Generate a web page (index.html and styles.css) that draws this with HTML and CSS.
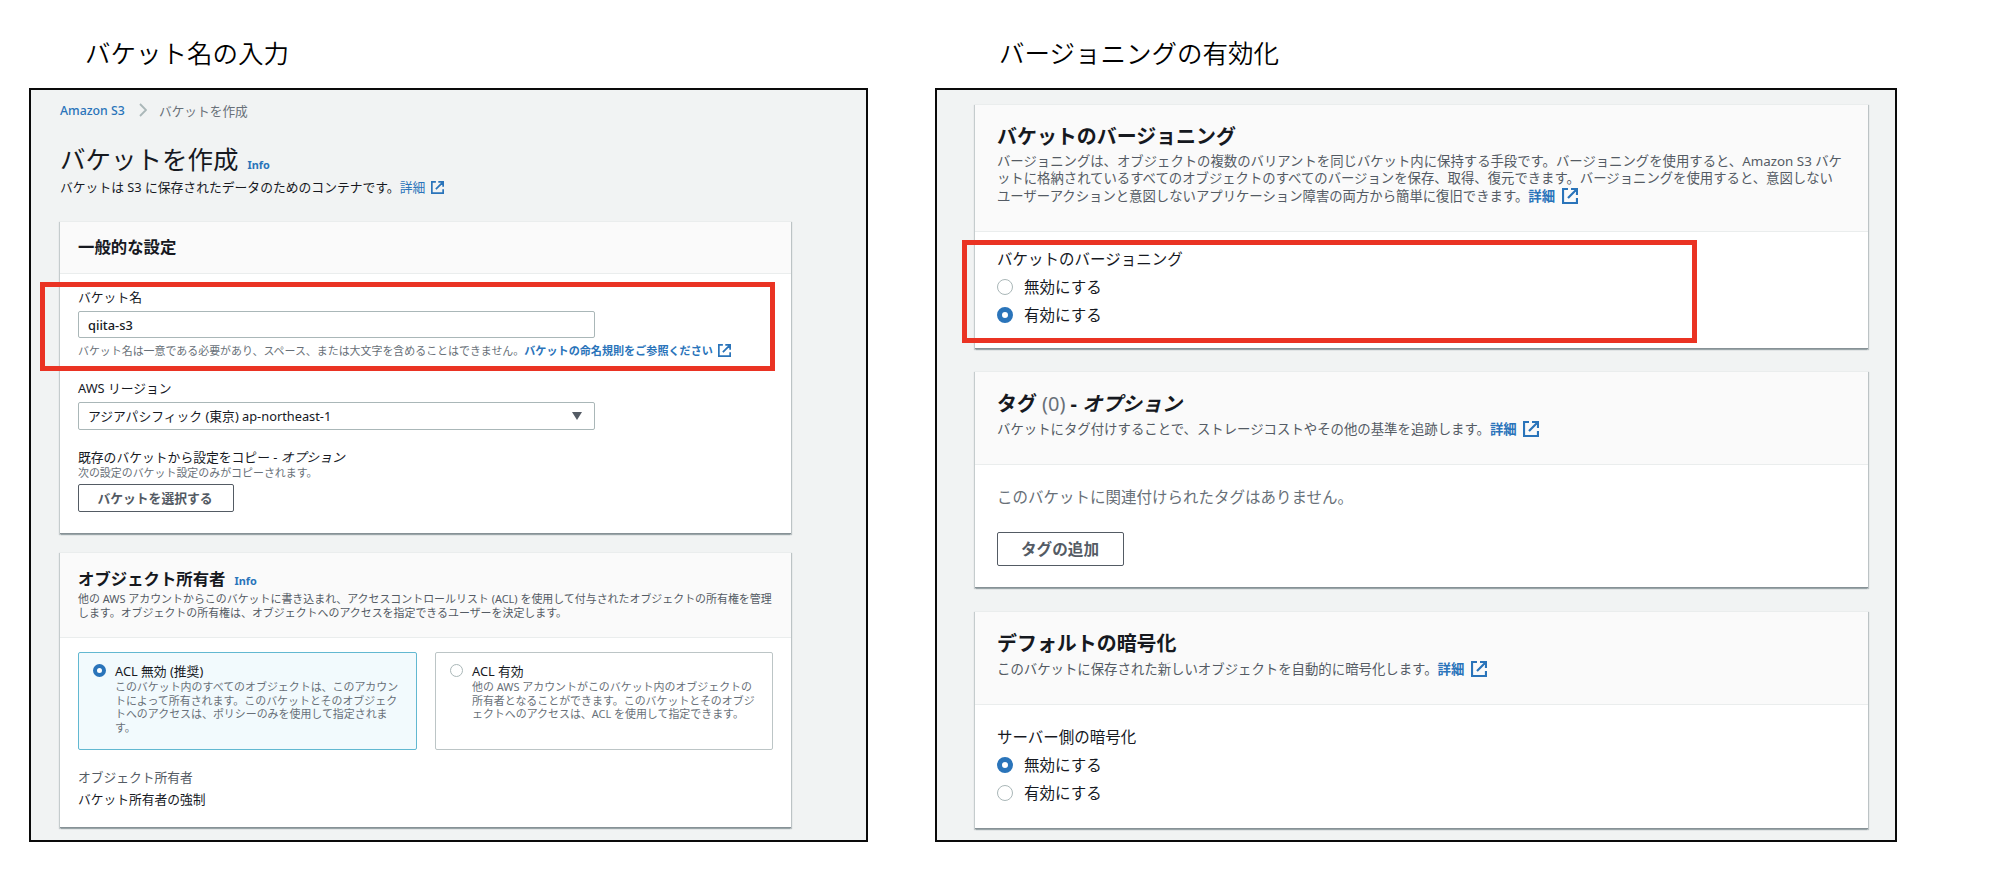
FILE: index.html
```html
<!DOCTYPE html>
<html lang="ja">

<head>
    <meta charset="UTF-8">
    <meta name="viewport" content="width=device-width, initial-scale=1.0">
    <title>バケットを作成</title>
    <link rel="stylesheet" href="styles.css">
</head>

<body>
    <!-- external link icon, used after every link -->
    <svg class="defs" width="0" height="0">
        <symbol id="external" viewBox="0 0 16 16">
            <path d="M6 1H1v14h14v-5M9 1h6v6M15 1L6 10" fill="none" stroke="currentColor" stroke-width="2.2" />
        </symbol>
    </svg>

    <div class="slide">
        <section class="column left">
            <h2 class="caption">バケット名の入力</h2>
            <div class="screen">
                <nav class="breadcrumb">
                    <a>Amazon S3</a>
                    <svg class="chevron" viewBox="0 0 8 14">
                        <path d="M1 1l6 6-6 6" fill="none" stroke="#aab7b8" stroke-width="1.8" />
                    </svg>
                    <span>バケットを作成</span>
                </nav>
                <h1 class="pageTitle">バケットを作成<a class="info">Info</a></h1>
                <p class="subtitle">バケットは S3 に保存されたデータのためのコンテナです。<a>詳細 <svg class="ext"><use href="#external" /></svg></a></p>

                <div class="card general">
                    <div class="cardHead">
                        <h3>一般的な設定</h3>
                    </div>
                    <div class="cardBody">
                        <div class="label">バケット名</div>
                        <div class="field">qiita-s3</div>
                        <p class="hint nameHint">バケット名は一意である必要があり、スペース、または大文字を含めることはできません。<a>バケットの命名規則をご参照ください <svg class="ext"><use href="#external" /></svg></a></p>
                        <div class="label">AWS リージョン</div>
                        <div class="field select">アジアパシフィック (東京) ap-northeast-1<span class="arrow"></span></div>
                        <div class="label">既存のバケットから設定をコピー - <i>オプション</i></div>
                        <p class="hint">次の設定のバケット設定のみがコピーされます。</p>
                        <button class="btn">バケットを選択する</button>
                    </div>
                    <div class="mark"></div>
                </div>

                <div class="card owner">
                    <div class="cardHead">
                        <h3>オブジェクト所有者<a class="info">Info</a></h3>
                        <p class="desc">他の AWS アカウントからこのバケットに書き込まれ、アクセスコントロールリスト (ACL) を使用して付与されたオブジェクトの所有権を管理<br>します。オブジェクトの所有権は、オブジェクトへのアクセスを指定できるユーザーを決定します。</p>
                    </div>
                    <div class="cardBody">
                        <div class="tiles">
                            <div class="tile selected">
                                <span class="radio on"></span>
                                <div>
                                    <div class="tileTitle">ACL 無効 (推奨)</div>
                                    <p class="tileText">このバケット内のすべてのオブジェクトは、このアカウン<br>トによって所有されます。このバケットとそのオブジェク<br>トへのアクセスは、ポリシーのみを使用して指定されま<br>す。</p>
                                </div>
                            </div>
                            <div class="tile">
                                <span class="radio"></span>
                                <div>
                                    <div class="tileTitle">ACL 有効</div>
                                    <p class="tileText">他の AWS アカウントがこのバケット内のオブジェクトの<br>所有者となることができます。このバケットとそのオブジ<br>ェクトへのアクセスは、ACL を使用して指定できます。</p>
                                </div>
                            </div>
                        </div>
                        <div class="key">オブジェクト所有者</div>
                        <div class="value">バケット所有者の強制</div>
                    </div>
                </div>
            </div>
        </section>

        <section class="column right">
            <h2 class="caption">バージョニングの有効化</h2>
            <div class="screen">
                <div class="card versioning">
                    <div class="cardHead">
                        <h3>バケットのバージョニング</h3>
                        <p class="desc">バージョニングは、オブジェクトの複数のバリアントを同じバケット内に保持する手段です。バージョニングを使用すると、Amazon S3 バケ<br>ットに格納されているすべてのオブジェクトのすべてのバージョンを保存、取得、復元できます。バージョニングを使用すると、意図しない<br>ユーザーアクションと意図しないアプリケーション障害の両方から簡単に復旧できます。<a>詳細 <svg class="ext"><use href="#external" /></svg></a></p>
                    </div>
                    <div class="cardBody">
                        <div class="label">バケットのバージョニング</div>
                        <div class="option"><span class="radio"></span>無効にする</div>
                        <div class="option"><span class="radio on"></span>有効にする</div>
                    </div>
                    <div class="mark"></div>
                </div>

                <div class="card tags">
                    <div class="cardHead">
                        <h3>タグ <span class="count">(0)</span> - <i>オプション</i></h3>
                        <p class="desc">バケットにタグ付けすることで、ストレージコストやその他の基準を追跡します。<a>詳細 <svg class="ext"><use href="#external" /></svg></a></p>
                    </div>
                    <div class="cardBody">
                        <p class="empty">このバケットに関連付けられたタグはありません。</p>
                        <button class="btn">タグの追加</button>
                    </div>
                </div>

                <div class="card encryption">
                    <div class="cardHead">
                        <h3>デフォルトの暗号化</h3>
                        <p class="desc">このバケットに保存された新しいオブジェクトを自動的に暗号化します。<a>詳細 <svg class="ext"><use href="#external" /></svg></a></p>
                    </div>
                    <div class="cardBody">
                        <div class="label">サーバー側の暗号化</div>
                        <div class="option"><span class="radio on"></span>無効にする</div>
                        <div class="option"><span class="radio"></span>有効にする</div>
                    </div>
                </div>
            </div>
        </section>
    </div>
</body>

</html>
```
FILE: styles.css
```css
* {
    margin: 0;
    padding: 0;
    box-sizing: border-box;
}

body {
    background-color: #fff;
    color: #16191f;
    font-family: "Noto Sans", "Noto Sans CJK JP", sans-serif;
    white-space: nowrap;
    overflow: hidden;
}

a {
    color: #2a74ba;
}

.defs {
    position: absolute;
}

.slide {
    display: flex;
    gap: 67px;
    padding-left: 29px;
    height: 886px;
}

.left {
    width: 839px;
}

.right {
    width: 962px;
}

.caption {
    height: 88px;
    padding: 33px 0 0 56px;
    font-size: 25.5px;
    font-weight: 350;
    line-height: 40px;
    color: #000;
}

.right .caption {
    padding-left: 64px;
}

.screen {
    height: 754px;
    border: 2px solid #0a0a0a;
    background-color: #f1f3f3;
}

.left .screen {
    padding: 12px 0 0 29px;
}

.right .screen {
    padding: 14px 0 0 38px;
}

/* page header */
.breadcrumb {
    display: flex;
    align-items: center;
    height: 16px;
    font-size: 12.7px;
    color: #687078;
}

.breadcrumb a {
    width: 65px;
    font-size: 12.3px;
    font-weight: 500;
}

.chevron {
    width: 8px;
    height: 14px;
    margin: 0 12px 0 14px;
}

.pageTitle {
    margin-top: 23px;
    font-size: 25.5px;
    font-weight: 400;
    line-height: 36px;
}

.info {
    margin-left: 9px;
    font-size: 10.9px;
    font-weight: 700;
    line-height: 1;
}

.subtitle {
    margin-top: 2px;
    height: 16px;
    font-size: 12.8px;
    line-height: 16px;
}

.ext {
    width: 13px;
    height: 13px;
    vertical-align: -2px;
    margin-left: 2px;
}

/* cards */
.card {
    position: relative;
    background-color: #fff;
    border-bottom: 1px solid #879196;
    box-shadow: 1px 1px 1px rgba(0, 28, 36, 0.22), -1px 1px 1px rgba(0, 28, 36, 0.18);
}

.cardHead {
    background-color: #fafafa;
    border-top: 1px solid #eaeded;
    border-bottom: 1px solid #eaeded;
}

.left .card {
    width: 731px;
}

.left .cardHead,
.left .cardBody {
    padding-left: 18px;
}

.left h3 {
    font-size: 16.4px;
    line-height: 20px;
}

.general {
    height: 313px;
    margin-top: 26px;
}

.general .cardHead {
    height: 53px;
    padding-top: 15px;
}

.general .cardBody {
    padding-top: 15px;
}

.left .label {
    font-size: 12.8px;
    line-height: 16px;
}

.field {
    width: 517px;
    height: 27px;
    margin-top: 6px;
    padding-left: 9px;
    border: 1px solid #aab7b8;
    border-radius: 2px;
    font-size: 12.8px;
    font-weight: 500;
    line-height: 27px;
}

.select {
    display: flex;
    justify-content: space-between;
    height: 28px;
    margin-bottom: 19px;
    padding-right: 12px;
    font-weight: 400;
    line-height: 26px;
}

.arrow {
    align-self: center;
    border: 5px solid transparent;
    border-top: 8px solid #545b64;
    border-bottom: 0;
}

.hint {
    margin-top: 1px;
    font-size: 10.95px;
    line-height: 14px;
    color: #687078;
}

.nameHint {
    height: 16px;
    margin: 5px 0 21px;
    line-height: 16px;
}

.hint a,
.desc a {
    font-weight: 700;
}

.nameHint a {
    font-size: 11.1px;
}

.btn {
    display: block;
    border: 1px solid #545b64;
    border-radius: 2px;
    background-color: #fff;
    color: #545b64;
    font-family: inherit;
    font-weight: 700;
}

.left .btn {
    width: 156px;
    height: 28px;
    margin-top: 4px;
    padding-right: 2px;
    font-size: 12.8px;
    line-height: 24px;
}

.owner {
    height: 276px;
    margin-top: 18px;
}

.owner .cardHead {
    height: 86px;
    padding-top: 16px;
}

.owner .cardBody {
    padding-top: 14px;
}

.desc {
    color: #545b64;
}

.left .desc {
    margin-top: 3px;
    font-size: 10.95px;
    line-height: 13.6px;
}

.tiles {
    display: grid;
    grid-template-columns: 339px 338px;
    gap: 18px;
    height: 98px;
}

.tile {
    display: flex;
    gap: 9px;
    padding: 10px 0 0 14px;
    border: 1px solid #bcc5c6;
    border-radius: 2px;
}

.selected {
    border: 1px solid #62b8d1;
    background-color: #f2fafd;
}

.tileTitle {
    font-size: 12.8px;
    line-height: 16px;
}

.tileText {
    margin-top: 1px;
    font-size: 10.95px;
    line-height: 13.7px;
    color: #687078;
}

.radio {
    flex: none;
    width: 16px;
    height: 16px;
    border: 1px solid #aab7b8;
    border-radius: 50%;
    background-color: #fff;
}

.radio.on {
    border: 5px solid #2a74ba;
}

.left .radio {
    width: 13px;
    height: 13px;
    margin-top: 1px;
}

.left .radio.on {
    border-width: 4px;
}

.key,
.value {
    font-size: 12.75px;
    line-height: 16px;
}

.key {
    margin: 19px 0 6px;
    color: #545b64;
}

/* right side is the same console at a larger zoom */
.right .card {
    width: 893px;
    margin-bottom: 23px;
    font-size: 15.5px;
    line-height: 20px;
}

.right .cardHead {
    height: 94px;
    padding: 20px 0 0 22px;
}

.right .cardBody {
    padding: 22px 0 0 22px;
}

.right h3 {
    font-size: 19.95px;
    line-height: 24px;
}

.right .desc {
    margin-top: 5px;
    font-size: 13.4px;
    line-height: 17.3px;
}

.right .ext {
    width: 16px;
    height: 16px;
    vertical-align: -3px;
    margin-left: 3px;
}

.right .versioning {
    height: 245px;
    margin-bottom: 22px;
}

.versioning .cardHead {
    height: 128px;
}

.right .versioning .desc {
    margin-top: 4px;
    font-size: 13.37px;
}

.right .versioning .cardBody {
    padding-top: 17px;
}

.tags {
    height: 217px;
}

.encryption {
    height: 218px;
}

.count {
    font-weight: 400;
    color: #687078;
}

.option {
    display: flex;
    align-items: center;
    gap: 11px;
    margin-top: 8px;
}

.empty {
    color: #687078;
}

.right .btn {
    width: 127px;
    height: 34px;
    margin-top: 25px;
    padding-right: 1px;
    font-size: 15.6px;
    line-height: 30px;
}

/* red frames over the fields to fill in */
.mark {
    position: absolute;
    width: 735px;
    border: 5px solid #ea3323;
}

.general .mark {
    top: 61px;
    left: -20px;
    height: 89px;
}

.versioning .mark {
    top: 136px;
    left: -13px;
    height: 103px;
}
```
